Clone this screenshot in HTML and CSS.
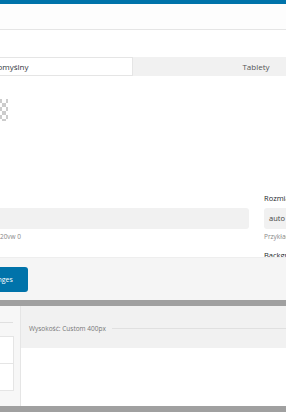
FILE: index.html
```html
<!DOCTYPE html>
<html lang="pl">
<head>
    <meta charset="UTF-8">
    <meta name="viewport" content="width=device-width, initial-scale=1.0">
    <title>Ustawienia sekcji</title>
    <link rel="stylesheet" href="styles.css">
</head>
<body>
    <div class="topbar"></div>
    <div class="header"></div>

    <div class="panel">
        <div class="tabs">
            <div class="tab active">Domyślny</div>
            <div class="tab">Tablety</div>
            <div class="tab">Telefony</div>
        </div>

        <div class="preview">
            <div class="checker"></div>
        </div>

        <div class="fields">
            <div class="field wide">
                <label>Margines</label>
                <div class="input"></div>
                <p class="hint">Przykład: 10px 20px 20vw 0</p>
            </div>
            <div class="field side">
                <label>Rozmiar</label>
                <div class="input">auto</div>
                <p class="hint">Przykład: cover</p>
                <label>Background</label>
            </div>
        </div>
    </div>

    <div class="footer">
        <button class="save">Save changes</button>
    </div>

    <div class="band"></div>

    <div class="editor">
        <div class="sidebar">
            <div class="side-head"></div>
            <div class="side-item"></div>
            <div class="side-item"></div>
        </div>
        <div class="main">
            <div class="ruler">
                <span>Wysokość: Custom 400px</span>
            </div>
        </div>
    </div>

    <div class="band"></div>
</body>
</html>
```

FILE: styles.css
```css
body {
    font-family: "Open Sans", "Noto Sans", sans-serif;
    font-size: 8px;
    margin: 0;
    width: 286px;
    height: 412px;
    overflow: hidden;
    color: #32373c;
    background: #fff;
}
.topbar {
    height: 4px;
    background-color: #0073aa;
}
.header {
    height: 25px;
    background-color: #fdfdfd;
    border-bottom: 1px solid #e5e5e5;
}
.panel {
    height: 227px;
    overflow: hidden;
}
.tabs {
    display: flex;
    margin: 27px 0 0 -113px;
    width: 738px;
}
.tab {
    flex-shrink: 0;
    width: 246px;
    height: 19px;
    line-height: 19px;
    text-align: center;
    background-color: #f1f1f1;
    color: #555;
    box-sizing: border-box;
}
.tab.active {
    background-color: #fff;
    color: #32373c;
    border: 1px solid #e5e5e5;
    line-height: 17px;
}
.preview {
    margin: 23px 0 0 -14px;
}
.checker {
    width: 22px;
    height: 22px;
    background-color: #fff;
    background-image:
        linear-gradient(45deg, #ccc 25%, transparent 25%, transparent 75%, #ccc 75%),
        linear-gradient(45deg, #ccc 25%, transparent 25%, transparent 75%, #ccc 75%);
    background-size: 8px 8px;
    background-position: 0 0, 4px 4px;
}
.fields {
    display: flex;
    gap: 15px;
    width: 600px;
    margin: 70px 0 0 -113px;
}
.field {
    flex-shrink: 0;
}
.field label {
    display: block;
    height: 14px;
    line-height: 14px;
    font-size: 7.5px;
    color: #23282d;
}
.field.wide {
    width: 362px;
}
.field.side {
    width: 200px;
}
.input {
    height: 21px;
    line-height: 21px;
    margin-top: 3px;
    padding: 0 5px;
    background-color: #f1f1f1;
    border-radius: 3px;
    color: #444;
    font-size: 7.5px;
}
.hint {
    margin: 4px 0 7px;
    height: 8px;
    line-height: 8px;
    font-size: 6.5px;
    color: #888;
}
.wide .hint {
    padding-left: 51px;
}
.footer {
    height: 43px;
    box-sizing: border-box;
    padding-top: 9px;
    margin-left: -41px;
    background-color: #f5f5f5;
    border-top: 1px solid #eee;
}
.save {
    height: 25px;
    padding: 0 15px 0 10px;
    border: none;
    border-radius: 3px;
    background-color: #0073aa;
    color: #fff;
    font-family: inherit;
    font-size: 7px;
}
.band {
    height: 6px;
    background-color: #a0a0a0;
}
.editor {
    display: flex;
    height: 100px;
}
.sidebar {
    width: 20px;
    background-color: #f7f7f7;
    border-right: 1px solid #e5e5e5;
}
.side-head {
    height: 16px;
    width: 13px;
    border-bottom: 1px solid #e0e0e0;
    margin-bottom: 14px;
}
.side-item {
    width: 13px;
    height: 26px;
    background-color: #fff;
    border: 1px solid #e5e5e5;
    border-left: none;
    margin-top: -1px;
}
.main {
    flex: 1;
}
.ruler {
    height: 42px;
    background-color: #f1f1f1;
    display: flex;
    align-items: center;
    padding: 2px 0 0 8px;
    box-sizing: border-box;
    color: #777;
    font-size: 6.5px;
}
.ruler::after {
    content: "";
    flex: 1;
    height: 1px;
    margin-left: 6px;
    background-color: #e0e0e0;
}
```
